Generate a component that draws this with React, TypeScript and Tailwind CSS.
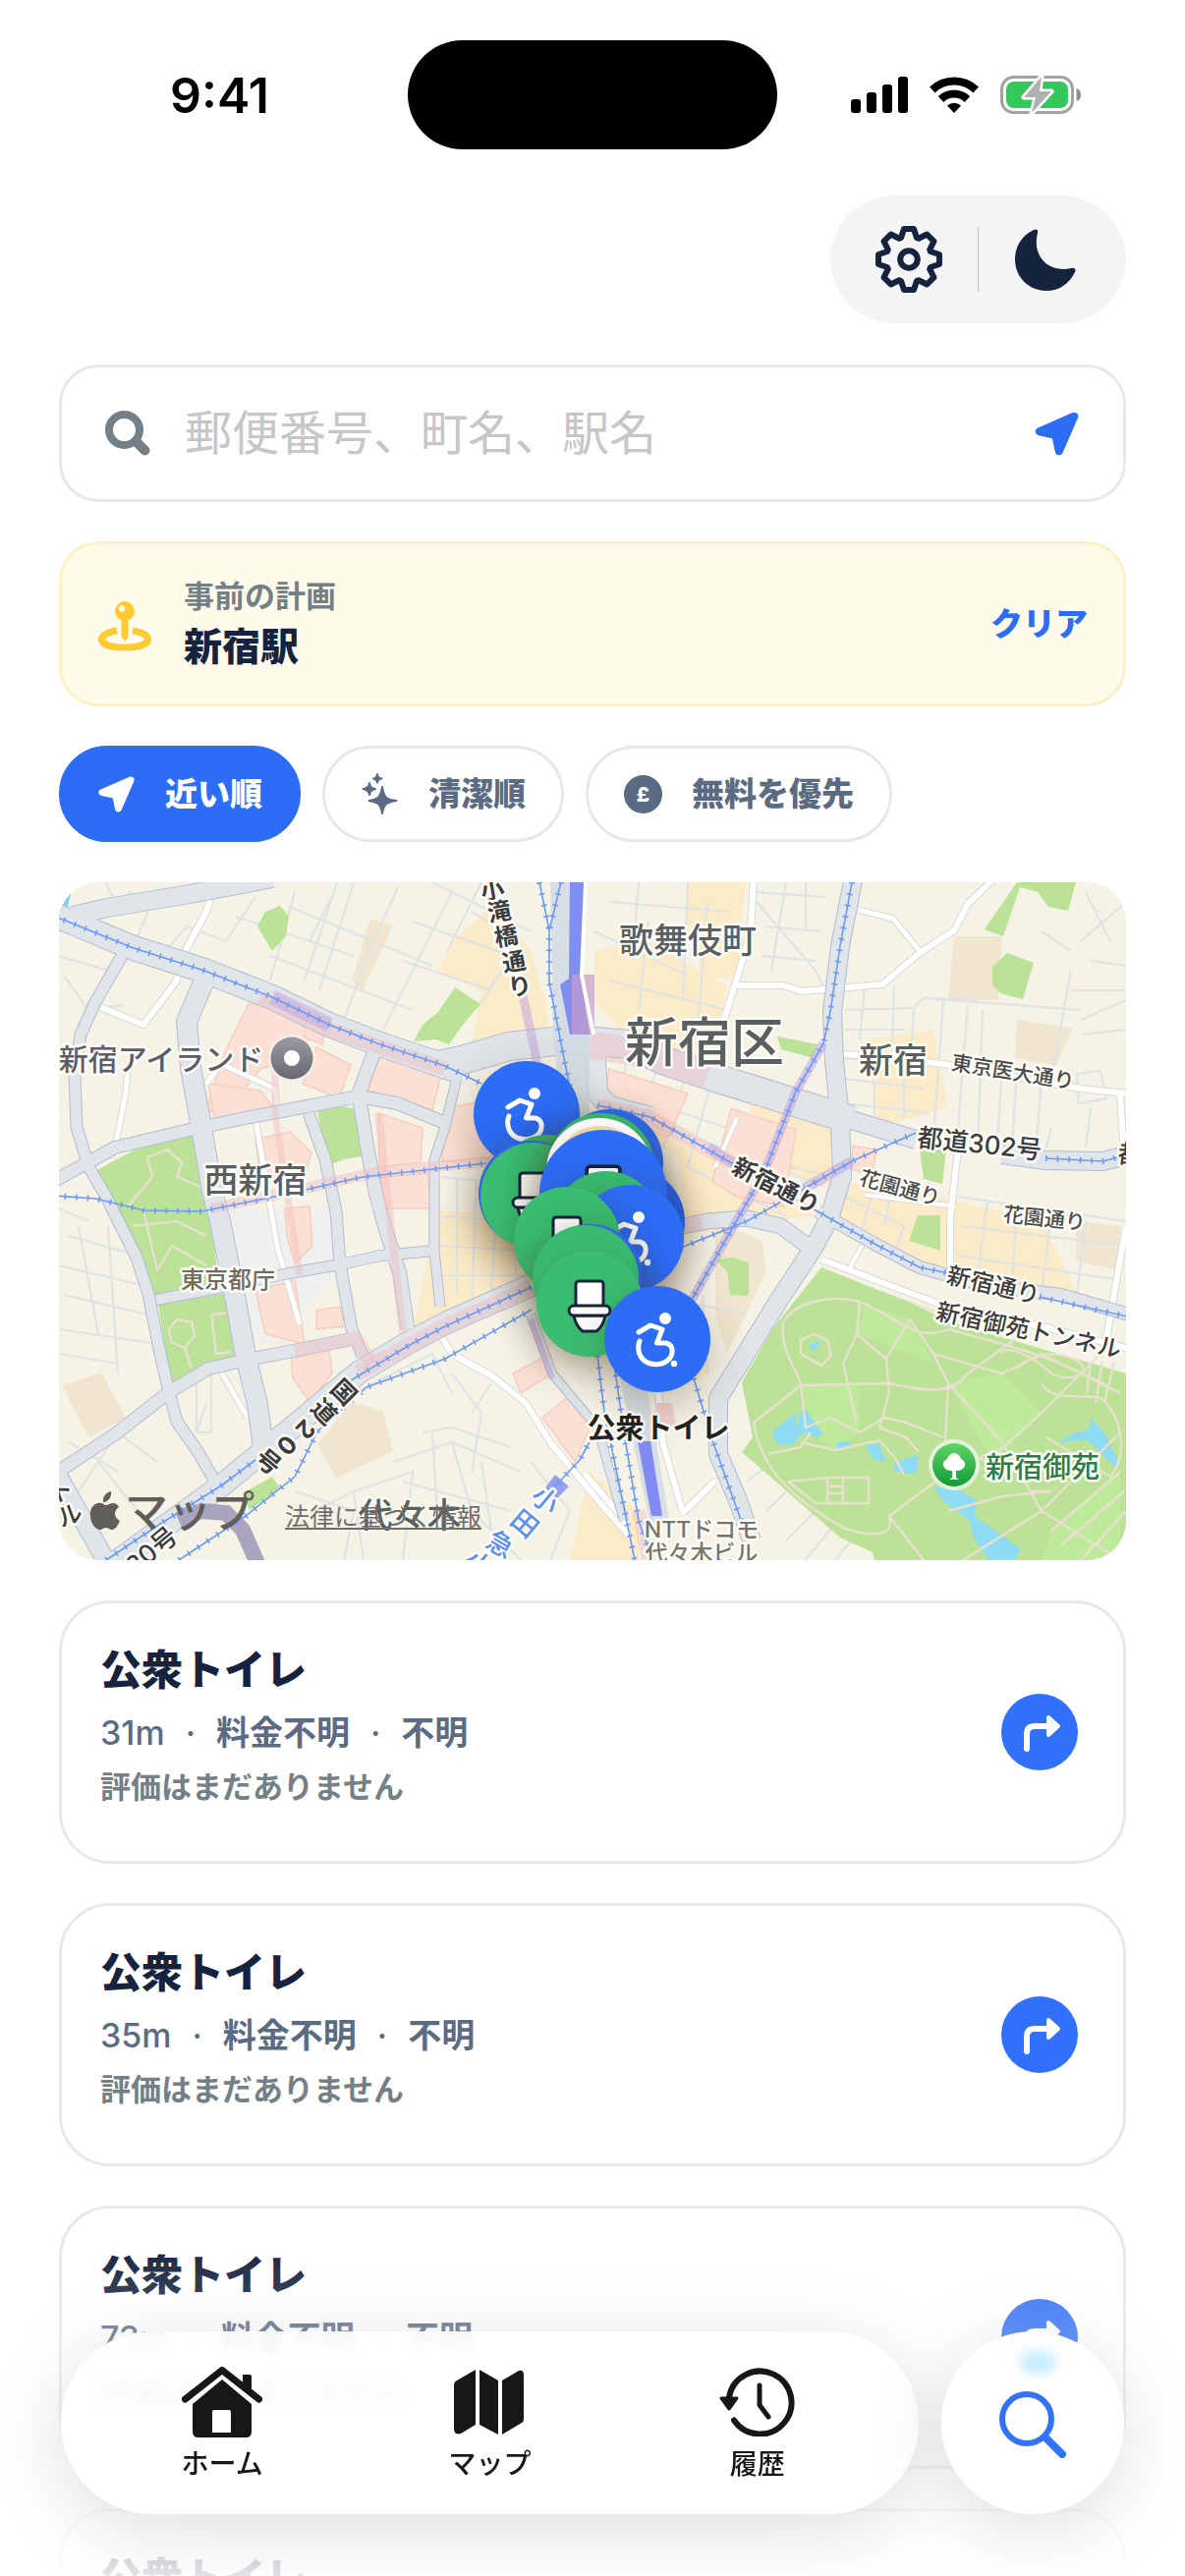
import { useState } from "react";

const places = [
  { id: 1, name: "公衆トイレ", distance: "31m", fee: "料金不明", access: "不明" },
  { id: 2, name: "公衆トイレ", distance: "35m", fee: "料金不明", access: "不明" },
  { id: 3, name: "公衆トイレ", distance: "73m", fee: "料金不明", access: "不明" },
  { id: 4, name: "公衆トイレ", distance: "80m", fee: "料金不明", access: "不明" },
];

// The map is drawn in a 1086 x 690 box
const MAP_W = 1086;
const MAP_H = 690;

type PinKind = "wheelchair" | "toilet" | "plain";

const pins: { x: number; y: number; size: number; color: string; kind: PinKind }[] = [
  { x: 476, y: 236, size: 108, color: "bg-[#2d6df6]", kind: "wheelchair" },
  { x: 497, y: 311, size: 108, color: "bg-[#3abd72]", kind: "plain" },
  { x: 481, y: 317, size: 108, color: "bg-[#2d6df6]", kind: "plain" },
  { x: 483, y: 319, size: 108, color: "bg-[#3abd72]", kind: "toilet" },
  { x: 561, y: 285, size: 108, color: "bg-[#2d6df6]", kind: "plain" },
  { x: 552, y: 289, size: 108, color: "bg-[#3abd72]", kind: "plain" },
  { x: 550, y: 294, size: 108, color: "bg-[#f6dfae] border-8 border-white", kind: "plain" },
  { x: 583, y: 345, size: 108, color: "bg-[#2560e6]", kind: "plain" },
  { x: 554, y: 317, size: 130, color: "bg-[#2d6df6]", kind: "toilet" },
  { x: 557, y: 348, size: 108, color: "bg-[#3abd72]", kind: "plain" },
  { x: 582, y: 362, size: 108, color: "bg-[#2d6df6]", kind: "wheelchair" },
  { x: 517, y: 364, size: 108, color: "bg-[#3abd72]", kind: "toilet" },
  { x: 540, y: 402, size: 108, color: "bg-[#2d6df6]", kind: "plain" },
  { x: 536, y: 403, size: 108, color: "bg-[#3abd72]", kind: "plain" },
  { x: 540, y: 429, size: 108, color: "bg-[#3abd72]", kind: "toilet" },
  { x: 609, y: 465, size: 108, color: "bg-[#2d6df6]", kind: "wheelchair" },
];

// d = centre line, w = width
const roads = [
  { w: 24, d: "M-10 31 L76 67 L148 90 L217 117 L275 145 L324 164 L393 187 L412 195" },
  { w: 28, d: "M385 186 L410 181 L458 167 L523 160 L580 165 L617 182 L668 199 L784 235 L807 242" },
  { w: 18, d: "M800 240 L872 262 M960 277 L1004 283 L1062 284 L1096 276" },
  { w: 18, d: "M14 34 L49 26 L133 12 L217 -4" },
  { w: 20, d: "M150 95 L130 142 L134 189 L145 249 L156 315 L164 345 L175 399 L190 482 L202 532 L210 590" },
  { w: 11, d: "M68 68 L37 122 L22 155 L16 199 L18 249 L30 289 L49 322 L79 382 L91 419 L102 475 L112 519 L120 549 L141 579 L160 612" },
  { w: 12, d: "M-10 307 L57 270 L133 252 L194 239 L248 229 L305 218 L344 225 L393 245" },
  { w: 13, d: "M320 175 L305 215 L313 265 L322 315 L332 352 L347 399 L355 455" },
  { w: 11, d: "M254 235 L271 282 L282 335 L286 389 L298 455 L309 482" },
  { w: 9, d: "M405 199 L393 249 L382 282 L382 342 L382 375 L388 432" },
  { w: 10, d: "M99 425 L152 415 L229 399 L286 389 L328 380 L382 375" },
  { w: 22, d: "M47 700 L164 615 L217 572 L305 499 L355 469 L393 449 L481 410" },
  { w: 12, d: "M-10 606 L57 562 L112 519 L152 495 L187 487 L248 475 L298 465" },
  { w: 18, d: "M-6 595 L53 700" },
  { w: 18, d: "M809 -6 L795 65 L787 132 L789 182 L795 242 L797 299 L784 342 L768 372 L733 425 L702 475 L671 525 L671 582 L691 629 L705 670" },
  { w: 15, d: "M620 353 L660 345 L700 342 L735 350 L764 372" },
  { w: 20, d: "M545 165 L548 215 L560 228 L602 239" },
  { w: 12, d: "M772 335 L830 368 L876 392 L940 410 L1020 420 L1096 442" },
  { w: 8, d: "M480 440 L502 500 L548 555 L575 650" },
];

const whiteRoads = [
  { w: 6, d: "M160 -4 L150 30 L122 82 L120 100 L86 145 L42 127" },
  { w: 5, d: "M70 190 L68 215 L58 265" },
  { w: 5, d: "M150 205 L165 185 L220 210 L222 235 M200 240 L210 300 L222 370 L245 450" },
  { w: 6, d: "M707 -4 L704 49 L691 95 L677 139 M689 105 L737 105 L756 111 L838 104 L876 72 L911 49 L925 22 L952 -4" },
  { w: 5, d: "M814 28 L849 37 L876 70" },
  { w: 6, d: "M799 175 L840 178 L900 185 L1040 210 L1096 216" },
  { w: 6, d: "M915 272 L907 342 L907 409 M1086 350 L1065 470 M1080 215 L1084 280" },
  { w: 6, d: "M776 384 L850 412 L911 435 L1000 452 L1090 475" },
  { w: 4, d: "M820 365 L805 392 M690 240 L668 290 M820 318 L912 330" },
  { w: 6, d: "M388 460 L400 480 L440 502 L475 530 L500 570 L545 625 L580 665" },
  { w: 6, d: "M610 520 L615 572 L635 642 M635 642 L668 609 M535 602 L580 655" },
  { w: 5, d: "M166 500 L192 545" },
];

const rails = [
  "M-6 34 L76 67 L148 90 L217 117 L275 145 L324 164 L393 187 L430 205",
  "M-6 319 L37 322 L87 334 L145 335 L210 322 L309 300 L435 286",
  "M294 509 L355 472 L393 452 L481 412",
  "M122 690 L190 645 L240 605 L263 559 L313 514 L393 485 L481 435",
  "M489 0 L499 49 L499 102 L512 169 L520 209",
  "M511 0 L499 49",
  "M807 0 L795 65 L785 132 L778 164 L749 215 L718 295 L691 342 L644 425",
  "M548 227 L602 239 L683 285 L772 335 L830 368 L876 392 L940 405 M998 422 L1096 444",
  "M633 372 L700 345 L753 315 L807 284 L872 255 M1004 281 L1062 284 L1086 278",
  "M548 482 L555 539 L586 690",
  "M565 490 L575 560 L590 650 L604 690",
  "M646 505 L664 565 L695 652",
  "M48 690 L100 655 L164 615 L200 588",
  "M500 620 L530 588 L548 555",
];

const parks = [
  "M776 392 L869 429 L905 447 L1086 500 V690 H830 L828 682 L795 667 L695 580 L706 565 L695 509 L726 455 Z",
  "M35 295 L85 268 L139 257 L152 332 L164 412 L97 420 L64 352 Z",
  "M101 430 L169 418 L181 482 L140 495 L114 510 Z",
  "M225 24 L234 35 L231 55 L217 70 L202 45 L210 30 Z",
  "M403 107 L429 124 L411 145 L397 165 L384 160 L361 162 L370 145 L386 132 Z",
  "M263 232 L283 228 L300 230 L309 279 L290 282 L273 289 Z",
  "M975 0 H1035 L1027 29 L1007 25 L996 10 L978 5 L961 55 L942 48 Z",
  "M965 72 L992 82 L981 119 L958 113 L950 105 V86 Z",
  "M731 157 L772 165 L768 179 L735 170 Z",
  "M876 272 H903 L899 307 L880 302 Z",
  "M874 339 H897 V375 L865 365 Z",
  "M668 384 L686 382 L702 387 V421 L683 420 L680 396 Z",
  "M217 605 L225 617 L194 639 L187 622 Z",
];

const tanBlocks = [
  "M317 37 L340 44 L309 110 L298 100 Z",
  "M3 512 L43 499 L68 545 L30 565 Z",
  "M298 529 L330 539 L340 579 L282 607 L263 572 Z",
  "M911 55 H960 L955 120 L905 118 Z",
  "M975 140 L1031 149 L1015 187 L973 179 Z",
  "M1035 345 L1080 350 L1078 395 L1035 385 Z",
  "M668 345 L715 365 L720 395 L680 480 L668 440 Z",
  "M780 396 L905 440 L903 448 L869 430 L790 402 Z",
];

const shopBlocks = [
  "M640 0 H700 L690 60 L640 45 Z",
  "M400 60 L445 20 L480 70 L495 120 L500 165 L420 165 L430 110 L385 90 Z",
  "M545 70 L600 60 L680 105 L660 190 L580 160 L545 120 Z",
  "M645 60 L700 55 L690 100 L655 95 Z",
  "M825 160 L890 150 L905 230 L830 250 Z",
  "M560 235 L690 290 L770 340 L700 345 L640 360 L630 280 Z",
  "M700 210 L785 240 L790 310 L715 290 Z",
  "M800 305 L900 320 L1000 345 L1040 425 L990 420 L850 380 L795 350 Z",
  "M385 335 L480 335 L490 405 L390 440 L360 455 Z",
  "M540 600 L590 640 V690 H520 Z",
  "M560 440 L640 430 L660 500 L620 520 Z",
];

const pinkBlocks = [
  "M194 122 L258 145 L247 178 L205 190 L165 240 L150 230 L170 170 Z",
  "M250 128 L272 136 L268 165 L250 158 Z",
  "M262 168 L297 186 L285 220 L248 205 Z",
  "M325 175 L388 200 L380 232 L315 212 Z",
  "M325 235 L370 250 L368 285 L326 290 Z",
  "M152 205 L205 212 L220 232 L158 240 Z",
  "M200 262 L235 254 L257 275 L250 300 L205 300 Z",
  "M328 300 L376 296 L378 332 L330 332 Z",
  "M392 230 L440 222 V280 L390 285 Z",
  "M200 415 L240 405 L250 470 L210 460 Z",
  "M262 436 L286 432 L292 452 L262 455 Z",
  "M236 482 L275 476 L278 500 L256 530 L238 505 Z",
  "M462 500 L500 480 L502 500 L470 520 Z",
  "M492 545 L520 522 L545 545 L525 590 Z",
  "M230 332 L255 330 L258 370 L240 388 L232 360 Z",
  "M684 230 L750 252 L738 330 L690 320 L665 305 Z",
  "M560 190 L640 215 L620 260 L555 230 Z",
  "M808 268 L832 272 L828 298 L806 292 Z",
];

const lakes = [
  "M726 559 L751 539 L749 556 L758 534 L778 562 L770 565 L757 560 L748 572 L736 573 L728 568 Z",
  "M820 574 L834 571 L842 589 L830 588 Z",
  "M792 570 L806 569 L804 574 L792 576 Z",
  "M849 592 L861 586 L875 584 L872 602 L860 602 L850 598 Z",
  "M890 615 L915 618 L934 629 L932 645 L979 679 L972 690 H946 L930 665 L927 650 L900 630 Z",
  "M1050 545 L1065 562 L1079 592 L1074 595 L1052 572 L1046 568 L1017 569 L1035 560 L1048 558 Z",
  "M764 472 L772 466 L774 472 L766 477 Z",
];

const trails = [
  "M737 448 C750 425 790 420 815 427 C850 440 870 470 905 455 C960 470 1010 480 1080 520",
  "M737 448 C733 480 755 500 755 512 L845 510 C890 520 910 520 925 500 L980 460",
  "M707 550 L755 512 L760 555 L785 545 L815 560 L840 545 L862 550 L900 565",
  "M707 550 C715 600 750 630 800 658 C840 670 850 660 845 645 C880 620 900 600 950 580",
  "M815 427 L812 460 L842 485 L845 520 L835 555 M812 460 L798 490 L812 550",
  "M866 445 L842 485 M866 445 L890 480 L905 510 L960 570 L1000 640 L1080 560",
  "M905 510 L902 570 L945 590 L1000 540 L1060 480 M890 480 L960 500 L1000 480 L1080 520",
  "M1000 510 C1010 530 1040 520 1060 525 C1080 540 1090 580 1070 605 L1005 565",
  "M960 480 C960 470 990 480 1010 500 C1030 510 1050 500 1040 490 C1010 470 985 485 975 495",
  "M722 582 L755 575 L765 560 M755 570 L790 578 L835 568 L850 585 L860 603 M835 555 L862 565 L875 580",
  "M742 610 L782 606 H824 V632 H782 V606 M742 610 L770 632 H824 M782 615 H798 M782 622 H798 M798 604 V632",
  "M845 645 L880 690 M920 690 L1000 640 M1000 640 L1080 690 M1010 660 L1080 600 M1020 675 L1084 620 M1040 690 L1086 640",
  "M755 480 V466 L768 460 L782 466 L786 482 L776 492 L755 480",
  "M1050 490 L1046 520 M1062 488 L1055 530 M1074 488 L1064 530 M990 620 H1010 L960 625 L905 640",
  "M90 280 L110 272 L125 285 L120 300 L145 310 M70 330 L95 300 L90 280 M75 350 L120 345 L150 360 M100 395 L115 370 L150 390 M85 330 L100 395",
  "M112 455 L120 445 L135 448 L138 462 L128 474 L114 468 Z M128 474 L135 495 M155 440 L160 480 L175 478 M155 440 L172 438",
];

const sideStreets = [
  "M0 75 L50 90 L40 130 M5 95 L30 130 L65 125 M45 -5 L60 25 M80 55 L95 20 L70 10",
  "M100 80 L130 45 L170 60 M170 60 L200 15 M240 10 L215 100 M255 60 L280 10 M285 -5 L250 100",
  "M180 35 L300 75 M235 25 L380 85 M215 75 L360 130 M300 0 L265 110 M345 5 L320 60 L290 140 M400 10 L330 150 M380 0 L480 50",
  "M360 40 L460 75 L425 130 M420 30 L470 60 M350 80 L440 110 M430 0 L395 70",
  "M560 20 L680 30 M545 50 L640 95 M590 0 L585 60 M600 40 L590 130 M640 0 L635 120 M560 100 L680 130 M660 20 L650 150",
  "M710 10 L780 15 M720 45 L775 50 M715 75 L770 80 M740 0 L725 90 M710 20 L770 90 L790 130 M760 0 V50",
  "M800 130 L870 128 L880 118 L935 120 M820 105 L815 160 M850 105 L848 170 M870 130 L865 200 M800 150 H860 M880 118 L1040 130 M925 125 L915 250",
  "M900 120 L890 260 M940 130 L935 270 M960 190 L955 265 M975 190 L970 270 M1000 200 L995 265 M1030 90 L1010 200 M1050 80 L1086 85 M860 200 V240 M830 190 V240 M1030 110 H1086 M1040 60 L1086 20 M1000 50 L1030 70",
  "M1036 195 L1060 192 L1066 220 L1038 225 Z M1040 140 L1086 120 M1042 155 L1086 150 M1045 10 L1070 60",
  "M820 180 H790 M800 200 L880 210 M800 225 L885 235 M1010 250 L1005 270 M1050 230 L1045 270",
  "M800 320 L860 350 L850 380 M830 310 L815 360 M850 300 L840 350 M915 320 L1086 345 M920 350 L1086 370 M915 380 L1080 405 M945 325 L935 400 M975 330 L970 410 M1010 335 L1000 420 M1045 345 L1035 430",
  "M560 210 L680 250 M580 170 L565 250 M610 180 L590 265 M640 190 L615 270 M665 200 L640 290 M620 250 L780 310 M640 290 L740 340 M720 240 L705 330 M750 250 L735 330 M700 280 L790 300",
  "M10 360 L80 380 M0 390 L85 410 M5 420 L90 440 M20 350 L40 460 M50 350 L60 500 M0 455 L100 470 M0 480 L60 490 M-5 330 L30 345",
  "M390 340 L470 345 M385 370 L480 375 M385 400 L475 400 M405 300 V420 M425 300 L420 430 M445 340 L440 420 M465 340 V410 M390 300 L440 305",
  "M300 520 L380 480 L400 520 M340 590 L400 570 L470 600 M380 560 L385 640 M350 610 L460 640 M400 570 L420 640 L470 690 M430 590 L440 660 M300 620 L360 600 L350 690 M260 640 L300 620 L310 690",
  "M400 500 L430 540 L420 600 M440 510 L420 540 M370 560 L400 555 L460 575 M240 620 L300 640 L290 690 M480 590 L520 640 L500 690",
  "M150 530 L140 560 M140 500 V560 H155 V500 M20 620 L60 560 L100 590 M40 590 L80 640 M10 570 L60 600",
  "M560 470 L580 500 M590 440 L640 460 M600 420 L700 440 M610 470 L625 500 M640 440 L640 500 M655 420 L660 500",
  "M720 640 L760 600 M740 670 L790 620 M760 690 L800 640 M700 610 L740 580 M790 690 L815 660",
];

const labels = [
  { t: "歌舞伎町", x: 640, y: 59, s: 35, c: "#5a5f60" },
  { t: "新宿区", x: 657, y: 163, s: 54, c: "#5a5f60" },
  { t: "新宿", x: 849, y: 181, s: 35, c: "#5a5f60" },
  { t: "東京医大通り", x: 971, y: 193, s: 21, c: "#4b4b4b", r: 9 },
  { t: "都道302号", x: 937, y: 266, s: 26, c: "#3c3c3e", r: 6 },
  { t: "都", x: 1091, y: 277, s: 26, c: "#3c3c3e", r: 6 },
  { t: "花園通り", x: 856, y: 311, s: 21, c: "#4b4b4b", r: 15 },
  { t: "花園通り", x: 1003, y: 342, s: 21, c: "#4b4b4b", r: 6 },
  { t: "新宿通り", x: 730, y: 309, s: 24, c: "#3c3c3e", r: 27, w: 700 },
  { t: "新宿通り", x: 951, y: 410, s: 24, c: "#3c3c3e", r: 13 },
  { t: "新宿御苑トンネル", x: 987, y: 456, s: 24, c: "#3c3c3e", r: 12 },
  { t: "新宿アイランド", x: 104, y: 180, s: 30, c: "#5c5c6b" },
  { t: "西新宿", x: 200, y: 303, s: 35, c: "#5a5f60" },
  { t: "東京都庁", x: 172, y: 404, s: 24, c: "#6d6c60" },
  { t: "代々木", x: 357, y: 644, s: 35, c: "#5a5f60" },
  { t: "公衆トイレ", x: 610, y: 555, s: 29, c: "#222222", w: 700 },
  { t: "NTTドコモ", x: 654, y: 659, s: 23, c: "#77766a" },
  { t: "代々木ビル", x: 654, y: 683, s: 23, c: "#77766a" },
  { t: "新宿御苑", x: 1001, y: 595, s: 29, c: "#2e7d46" },
  { t: "小", x: 441, y: 8, s: 24, c: "#3c3c3e", r: -10, w: 700 },
  { t: "滝", x: 448, y: 30, s: 24, c: "#3c3c3e", r: -10, w: 700 },
  { t: "橋", x: 455, y: 55, s: 24, c: "#3c3c3e", r: -10, w: 700 },
  { t: "通", x: 463, y: 81, s: 24, c: "#3c3c3e", r: -10, w: 700 },
  { t: "り", x: 469, y: 106, s: 24, c: "#3c3c3e", r: -10, w: 700 },
  { t: "国", x: 290, y: 519, s: 25, c: "#3c3c3e", r: 45, w: 700 },
  { t: "道", x: 270, y: 539, s: 25, c: "#3c3c3e", r: 45, w: 700 },
  { t: "2", x: 251, y: 557, s: 25, c: "#3c3c3e", r: 135, w: 700 },
  { t: "0", x: 232, y: 573, s: 25, c: "#3c3c3e", r: 135, w: 700 },
  { t: "号", x: 213, y: 590, s: 25, c: "#3c3c3e", r: 40, w: 700 },
  { t: "20号", x: 94, y: 680, s: 26, c: "#3c3c3e", r: -40 },
  { t: "ト", x: 2, y: 620, s: 25, c: "#3c3c3e", r: -20 },
  { t: "ル", x: 11, y: 644, s: 25, c: "#3c3c3e", r: -20 },
  { t: "小", x: 495, y: 629, s: 27, c: "#5b8ff0", r: 40 },
  { t: "田", x: 474, y: 653, s: 27, c: "#5b8ff0", r: 40 },
  { t: "急", x: 449, y: 674, s: 27, c: "#5b8ff0", r: 30 },
  { t: "小", x: 427, y: 694, s: 27, c: "#5b8ff0", r: 40 },
];

const MapDrawing = () => {
  return (
    <svg viewBox={`0 0 ${MAP_W} ${MAP_H}`} className="block w-full" aria-hidden="true">
      <defs>
        <linearGradient id="poiGray" x1="0" y1="0" x2="0" y2="1">
          <stop offset="0" stopColor="#9a9aa3" />
          <stop offset="1" stopColor="#686872" />
        </linearGradient>
        <linearGradient id="poiGreen" x1="0" y1="0" x2="0" y2="1">
          <stop offset="0" stopColor="#5fd566" />
          <stop offset="1" stopColor="#129a35" />
        </linearGradient>
      </defs>
      <rect width={MAP_W} height={MAP_H} fill="#f5f2e6" />
      <path d="M0 0 H15 L8 28 L0 36 Z" fill="#7fd3ea" />
      <path d="M175 332 H278 L285 390 L230 470 L200 470 Z" fill="#f0f0ef" />
      <g fill="#f0e5ce">
        {tanBlocks.map((d) => (
          <path key={d} d={d} />
        ))}
      </g>
      <g fill="#fcebc8">
        {shopBlocks.map((d) => (
          <path key={d} d={d} />
        ))}
      </g>
      <g fill="none" stroke="#dfe3e4" strokeWidth="2.2">
        {sideStreets.map((d) => (
          <path key={d} d={d} />
        ))}
      </g>
      <g fill="#fbe0d3" stroke="#f8cdc0" strokeWidth="1.5">
        {pinkBlocks.map((d) => (
          <path key={d} d={d} />
        ))}
      </g>
      <g fill="#bbe296">
        {parks.map((d) => (
          <path key={d} d={d} />
        ))}
      </g>
      <g fill="#c0ea9b">
        <path d="M820 430 L866 445 L890 490 L840 470 L812 460 Z" />
        <path d="M960 500 L1000 540 L950 590 L905 510 Z" />
        <path d="M755 512 L812 512 L815 560 L790 578 L760 555 Z" />
        <path d="M1010 660 L1080 600 V690 H1000 Z" />
      </g>
      <g fill="#8edbf4">
        {lakes.map((d) => (
          <path key={d} d={d} />
        ))}
      </g>
      <g fill="none" stroke="#e9e0cf" strokeWidth="2.4" strokeLinejoin="round">
        {trails.map((d) => (
          <path key={d} d={d} />
        ))}
      </g>
      {/* White roads */}
      <g fill="none" strokeLinejoin="round">
        {whiteRoads.map((road) => (
          <path key={road.d} d={road.d} stroke="#d9d9d6" strokeWidth={road.w + 2} />
        ))}
        {whiteRoads.map((road) => (
          <path key={road.d} d={road.d} stroke="#ffffff" strokeWidth={road.w} />
        ))}
      </g>
      {/* Main roads, casing first */}
      <g fill="none" strokeLinejoin="round">
        {roads.map((road) => (
          <path key={road.d} d={road.d} stroke="#b4bad2" strokeWidth={road.w + 2} />
        ))}
        {roads.map((road) => (
          <path key={road.d} d={road.d} stroke="#e0e5ea" strokeWidth={road.w} />
        ))}
      </g>
      {/* Station areas and underground passages */}
      <g fill="none" stroke="#f0b9bd" strokeOpacity=".42">
        <path d="M156 332 L248 312 L324 295 L440 284" strokeWidth="11" />
        <path d="M205 117 L275 150 L393 190" strokeWidth="15" />
        <path d="M305 499 L393 452 L481 412" strokeWidth="16" />
        <path d="M240 478 L302 464 L318 490" strokeWidth="14" />
        <path d="M325 235 L350 460" strokeWidth="8" />
        <path d="M540 165 L600 176 L660 196" strokeWidth="28" />
        <path d="M220 190 V235 L245 400" strokeWidth="7" />
        <path d="M548 227 L602 239 L683 285" strokeWidth="14" />
        <path d="M590 640 L600 690 M630 352 L655 346" strokeWidth="14" />
      </g>
      <g fill="none" stroke="#c3a6dc" strokeOpacity=".55">
        <path d="M778 164 L749 215 L718 295 L691 342 L644 425" strokeWidth="9" />
        <path d="M472 115 L485 175 L490 215" strokeWidth="9" />
        <path d="M217 117 L275 145" strokeWidth="15" />
        <path d="M753 315 L807 284 M660 270 L690 288" strokeWidth="11" />
        <path d="M480 445 L502 505" strokeWidth="6" />
      </g>
      <path d="M122 650 L145 640 L170 642 L187 659 L205 700" fill="none" stroke="#aba4bf" strokeWidth="16" />
      <path d="M500 0 H522 V150 H540 V240 H512 L503 160 Z M570 500 H596 L622 655 H602 Z" fill="#cfd9e4" fillOpacity=".8" />
      <path d="M520 -2 H536 L531 95 L540 155 H520 L510 104 L519 98 Z" fill="#808ef2" />
      <path d="M522 94 L545 94 L545 155 L522 155 Z" fill="#c69ccb" fillOpacity=".7" />
      <path d="M536 0 L532 95 L544 155" fill="none" stroke="#ffffff" strokeWidth="4" />
      <path d="M589 569 L602 569 L614 645 H603 Z" fill="#8189f2" />
      <path d="M608 530 L624 530 L628 553 L612 555 Z" fill="#f3d2ce" />
      <path d="M505 603 L519 615 L506 628 L495 616 Z" fill="#96a0ea" />
      <g fill="none" strokeLinejoin="round">
        {rails.map((d) => (
          <g key={d}>
            <path d={d} stroke="#6c9af5" strokeWidth="1.6" />
            <path d={d} stroke="#6c9af5" strokeWidth="6" strokeDasharray="1.6 10" />
          </g>
        ))}
      </g>
      {/* Points of interest */}
      <circle cx="237" cy="179" r="24" fill="#f2efed" />
      <circle cx="237" cy="179" r="21.5" fill="url(#poiGray)" />
      <circle cx="237" cy="179" r="8" fill="#ffffff" />
      <circle cx="911" cy="593" r="26" fill="#e6f3dc" />
      <circle cx="911" cy="593" r="22" fill="url(#poiGreen)" />
      <path d="M909 606 V599 Q902 599 900 594 Q899 589 904 587 Q905 582 911 581 Q917 582 918 587 Q923 589 922 594 Q920 599 913 599 V606 L916 608 H906 Z" fill="#ffffff" />
      {/* Place names */}
      {labels.map((label, key) => (
        <text
          key={key}
          x={label.x}
          y={label.y}
          fontSize={label.s}
          fill={label.c}
          fontWeight={label.w ?? 500}
          stroke="#fdfcf7"
          strokeWidth="5"
          strokeLinejoin="round"
          paintOrder="stroke"
          textAnchor="middle"
          dominantBaseline="central"
          transform={label.r ? `rotate(${label.r} ${label.x} ${label.y})` : undefined}
        >
          {label.t}
        </text>
      ))}
      {/* Map provider mark */}
      <path
        d="M53 620 C54 626 50 631 45 631 C44 626 48 621 53 620 Z M32 645 C31 636 37 631 43 632 C45 632 46 634 48 634 C50 634 52 632 55 632 C58 632 60 634 61 636 C55 640 56 647 62 650 C60 655 57 659 54 659 C52 659 50 657 48 657 C45 657 44 659 42 659 C37 659 32 652 32 645 Z"
        fill="#5f5e5a"
      />
      <text x="133" y="641" fontSize="44" fontWeight="500" fill="#5f5e5a" textAnchor="middle" dominantBaseline="central">
        マップ
      </text>
    </svg>
  );
};

const WheelchairIcon = () => (
  <svg viewBox="0 0 108 108" className="size-full" fill="none" stroke="#fff" strokeWidth="5" strokeLinecap="round" strokeLinejoin="round" aria-hidden="true">
    <circle cx="62" cy="33" r="6" fill="#fff" stroke="none" />
    <path d="M35 47 L47 40 L59 44 L53.500 58 L63 58 Q70 60 69 68 C66 84 38 84 35 66 Q34 60 36 56" />
    <circle cx="71" cy="79" r="3.2" fill="#fff" stroke="none" />
  </svg>
);

const ToiletIcon = () => (
  <svg viewBox="0 0 108 108" className="size-full" fill="#fff" stroke="#16233f" strokeWidth="3" strokeLinejoin="round" aria-hidden="true">
    <rect x="40" y="31" width="28" height="26" rx="3" />
    <path d="M38 66 H70 Q68 77 61 82 H47 Q40 77 38 66 Z" />
    <rect x="33" y="56" width="42" height="10" rx="5" />
  </svg>
);

const NavigateIcon = ({ className }: { className: string }) => (
  <svg viewBox="0 0 40 40" className={className} fill="currentColor" stroke="currentColor" strokeWidth="7" strokeLinejoin="round" aria-hidden="true">
    <path d="M35 5 L5 18 L19 21 L22 35 Z" />
  </svg>
);

const SparklesIcon = () => (
  <svg viewBox="0 0 36 42" className="h-[42px] w-[39px]" fill="currentColor" stroke="currentColor" strokeWidth="2" strokeLinejoin="round" aria-hidden="true">
    <path d="M20.500 14 Q22 23 25 25 Q28 27 35 28 Q28 29 25 31 Q22 33 20.500 41 Q19 33 16 31 Q13 29 7 28 Q13 27 16 25 Q19 23 20.500 14 Z" />
    <path d="M7.500 10 Q8 15 13.500 16 Q8 17 7.500 22 Q7 17 1 16 Q7 15 7.500 10 Z" />
    <path d="M15.500 1 Q16 5 20 5.500 Q16 6 15.500 9.500 Q15 6 11.500 5.500 Q15 5 15.500 1 Z" />
  </svg>
);

const PoundIcon = () => (
  <svg viewBox="0 0 38 38" className="size-[39px]" aria-hidden="true">
    <circle cx="19" cy="19" r="19" fill="currentColor" />
    <text x="19" y="26" fontSize="20" fontWeight="800" fill="#fff" textAnchor="middle">
      £
    </text>
  </svg>
);

const GearIcon = () => (
  <svg viewBox="-34 -34 68 68" className="size-[68px]" fill="none" stroke="currentColor" strokeWidth="6" strokeLinejoin="round" aria-hidden="true">
    <path
      d={
        [0, 45, 90, 135, 180, 225, 270, 315]
          .flatMap((deg) => {
            const a = (deg * Math.PI) / 180;
            return [
              [-8, -22],
              [-5, -31],
              [5, -31],
              [8, -22],
            ].map(([x, y]) => `${x * Math.cos(a) - y * Math.sin(a)} ${x * Math.sin(a) + y * Math.cos(a)}`);
          })
          .map((point, key) => (key === 0 ? "M" : "L") + point)
          .join(" ") + " Z"
      }
    />
    <circle r="8.800" />
  </svg>
);

const StatusBar = () => {
  return (
    <div className="flex pt-[41px] text-black">
      <div className="flex flex-1 items-center justify-center pl-8 text-[50px] leading-none font-semibold">9:41</div>
      <div className="h-[111px] w-[376px] rounded-full bg-black" />
      <div className="flex flex-1 items-center justify-center gap-[22px] pr-8">
        <svg viewBox="0 0 58 37" className="h-[37px] w-[58px]" aria-hidden="true">
          <rect y="23" width="10" height="14" rx="3" />
          <rect x="16" y="16" width="10" height="21" rx="3" />
          <rect x="32" y="8" width="10" height="29" rx="3" />
          <rect x="48" width="10" height="37" rx="3" />
        </svg>
        <svg viewBox="0 0 50 37" className="h-[37px] w-[50px]" fill="none" stroke="#000" strokeWidth="8" aria-hidden="true">
          <path d="M2.800 13.500 A32 32 0 0 1 47.200 13.500" />
          <path d="M11.500 23 A19.500 19.500 0 0 1 38.500 23" />
          <path d="M25 37 L18 29.500 A10 10 0 0 1 32 29.500 Z" fill="#000" stroke="none" />
        </svg>
        <svg viewBox="0 0 82 39" className="h-[39px] w-[82px]" aria-hidden="true">
          <rect x="1.500" y="1.500" width="72" height="36" rx="12" fill="none" stroke="#a2a2a2" strokeWidth="3" />
          <rect x="6" y="6" width="63" height="27" rx="8" fill="#34c759" />
          <path d="M77.500 13 Q82 14 82 19.500 Q82 25 77.500 26 Z" fill="#8f8f8f" />
          <path d="M42 1 L24 22 H36 L32 38 L52 16 H40 Z" fill="#b0b0b0" stroke="#fff" strokeWidth="5" strokeLinejoin="round" paintOrder="stroke" />
        </svg>
      </div>
    </div>
  );
};

const filters = [
  { id: "near", title: "近い順", icon: <NavigateIcon className="size-[39px]" /> },
  { id: "clean", title: "清潔順", icon: <SparklesIcon /> },
  { id: "free", title: "無料を優先", icon: <PoundIcon /> },
];

const tabs = [
  {
    title: "ホーム",
    icon: (
      <svg viewBox="0 0 82 72" className="h-[72px] w-[82px]" fill="currentColor" aria-hidden="true">
        <path d="M3.500 33 L41 3.500 L78.500 33" fill="none" stroke="currentColor" strokeWidth="7" strokeLinecap="round" strokeLinejoin="round" />
        <path d="M62 8 H69 Q71 8 71 10 V29 L62 21 Z" />
        <path fillRule="evenodd" d="M41 13 L71 38 V66 Q71 72 65 72 H17 Q11 72 11 66 V38 Z M33 44 Q31 44 31 46 V67 H50 V46 Q50 44 48 44 Z" />
      </svg>
    ),
  },
  {
    title: "マップ",
    icon: (
      <svg viewBox="0 0 72 66" className="h-[66px] w-[72px]" fill="currentColor" aria-hidden="true">
        <path d="M22 0 V56 L7 65 Q0 67 0 60 V16 Q0 12 3 11 Z" />
        <path d="M26 0 L45 11 V66 L26 56 Z" />
        <path d="M49 66 V11 L66 1 Q71 0 71 5 V50 Q71 53 69 54 Z" />
      </svg>
    ),
  },
  {
    title: "履歴",
    icon: (
      <svg viewBox="0 0 77 70" className="h-[70px] w-[77px]" fill="none" stroke="currentColor" strokeWidth="6" strokeLinecap="round" strokeLinejoin="round" aria-hidden="true">
        <path d="M15 53.500 A32 32 0 1 0 10 30" />
        <path d="M41 18 V38 L50 50" strokeWidth="5" />
        <path d="M2 31 H18 L10 42 Z" fill="currentColor" strokeWidth="3" />
      </svg>
    ),
  },
];

const App = () => {
  const [filter, setFilter] = useState("near");
  const [query, setQuery] = useState("");

  return (
    <div className="relative h-screen overflow-hidden bg-white font-['Inter','Noto_Sans_CJK_JP',sans-serif] text-[#16233f]">
      <StatusBar />

      <main className="px-[60px] pt-[47px]">
        {/* Settings and theme */}
        <div className="flex justify-end">
          <div className="flex h-[130px] items-center rounded-full bg-[#f4f4f5] px-[10px]">
            <button className="flex w-[140px] justify-center" aria-label="設定">
              <GearIcon />
            </button>
            <div className="h-[66px] w-px bg-[#bcbcbe]" />
            <button className="flex w-[140px] justify-center pr-1" aria-label="ダークモード">
              <svg viewBox="0 0 62 63" className="h-[63px] w-[62px]" fill="currentColor" aria-hidden="true">
                <path d="M19 1 Q24 -1 23 4 C17 28 34 45 57 40 Q63 39 61 44 C55 56 45 63 32 63 C14 63 0 49 0 31 C0 17 8 6 19 1 Z" />
              </svg>
            </button>
          </div>
        </div>

        {/* Search */}
        <div className="mt-[42px] flex h-[140px] items-center rounded-[40px] border-3 border-[#e5e9ed] bg-white pr-[44px] pl-11">
          <svg viewBox="0 0 46 46" className="size-[46px] shrink-0 text-[#747f86]" fill="none" stroke="currentColor" strokeLinecap="round" aria-hidden="true">
            <circle cx="19.500" cy="19.500" r="15.500" strokeWidth="8" />
            <path d="M32 32 L40.500 40.500" strokeWidth="10" />
          </svg>
          <input
            type="text"
            aria-label="検索"
            value={query}
            onChange={(e) => setQuery(e.target.value)}
            placeholder="郵便番号、町名、駅名"
            className="ml-[35px] min-w-0 flex-1 text-[48px] outline-none placeholder:text-[#c5c6c8]"
          />
          <button className="text-[#2d6df6]" aria-label="現在地">
            <NavigateIcon className="size-[47px]" />
          </button>
        </div>

        {/* Planned place */}
        <div className="mt-10 flex items-center rounded-[40px] border-3 border-[#ffefc3] bg-[#fffbea] py-8 pr-9 pl-[37px]">
          <svg viewBox="0 0 54 51" className="mt-1 h-[51px] w-[54px] shrink-0" aria-hidden="true">
            <path d="M19 30 C-3 33 -3 47 27 47 C57 47 57 33 35 30" fill="none" stroke="#ffcb30" strokeWidth="7" />
            <path d="M23.500 18 H30.500 V36 L27 41 L23.500 36 Z" fill="#ffcb30" />
            <circle cx="27" cy="10" r="10" fill="#ffcb30" />
            <circle cx="24" cy="7.500" r="3.200" fill="#fffbea" />
          </svg>
          <div className="ml-[33px] flex-1 pb-0">
            <p className="text-[31px] leading-[42px] font-bold text-[#747f86]">事前の計画</p>
            <p className="mt-1 text-[39px] leading-[52px] font-black">新宿駅</p>
          </div>
          <button className="text-[33px] leading-10 font-black text-[#2d6df6]">クリア</button>
        </div>

        {/* Sort chips */}
        <div className="mt-10 flex gap-[22px]">
          {filters.map((item) => (
            <button
              key={item.id}
              onClick={() => setFilter(item.id)}
              aria-pressed={filter === item.id}
              className={`flex h-[98px] items-center gap-[30px] rounded-full border-3 px-9 text-[33px] leading-10 font-black whitespace-nowrap ${
                filter === item.id
                  ? "border-[#2d6df6] bg-[#2d6df6] text-white"
                  : "border-[#e6e8ec] bg-white text-[#5b6b84]"
              }`}
            >
              {item.icon}
              {item.title}
            </button>
          ))}
        </div>

        {/* Map */}
        <div className="relative mt-[41px] overflow-hidden rounded-[40px]">
          <MapDrawing />
          {pins.map((pin, key) => (
            <button
              key={key}
              aria-label="公衆トイレ"
              className={`absolute -translate-x-1/2 -translate-y-1/2 rounded-full shadow-[0_14px_44px_rgba(70,50,20,0.3)] ${pin.color}`}
              style={{
                left: `${(pin.x / MAP_W) * 100}%`,
                top: `${(pin.y / MAP_H) * 100}%`,
                width: pin.size,
                height: pin.size,
              }}
            >
              {pin.kind === "wheelchair" && <WheelchairIcon />}
              {pin.kind === "toilet" && <ToiletIcon />}
            </button>
          ))}
          <a href="#legal" className="absolute bottom-[28px] left-[230px] text-[25px] leading-8 text-[#6f6e6a] underline">
            法律に基づく情報
          </a>
        </div>

        {/* Results */}
        <ul className="mt-[41px] flex flex-col gap-10">
          {places.map((place) => (
            <li key={place.id} className="flex items-center rounded-[52px] border-3 border-[#e6e8ec] bg-white py-10 pr-[46px] pl-[39px]">
              <div className="flex-1 pt-1 pb-[15px]">
                <h2 className="text-[42px] leading-[48px] font-black">{place.name}</h2>
                <p className="mt-5 flex gap-[21px] text-[34px] leading-10 font-medium text-[#5b6b84]">
                  <span>{place.distance}</span>
                  <span>·</span>
                  <span className="font-bold">{place.fee}</span>
                  <span>·</span>
                  <span className="font-bold">{place.access}</span>
                </p>
                <p className="mt-[15px] text-[31px] leading-10 font-bold text-[#747f86]">評価はまだありません</p>
              </div>
              <button className="size-[78px] rounded-full bg-[#3070fa]" aria-label="経路">
                <svg viewBox="0 0 78 78" className="size-full" fill="none" stroke="#fff" strokeWidth="6" strokeLinecap="round" aria-hidden="true">
                  <path d="M26 56 V41 Q26 33 34 33 H46" />
                  <path d="M48 24 L58 33 L48 42 Z" fill="#fff" strokeWidth="4" strokeLinejoin="round" />
                </svg>
              </button>
            </li>
          ))}
        </ul>
      </main>

      {/* Bottom fade and tab bar */}
      <div className="pointer-events-none absolute inset-x-0 bottom-0 h-[340px] bg-linear-to-b from-white/0 to-white/88" />
      <nav className="absolute inset-x-[62px] bottom-[63px] flex gap-[23px]">
        <div className="flex h-[186px] flex-1 rounded-full bg-white/90 px-7 shadow-[0_16px_80px_rgba(0,0,0,0.13)] backdrop-blur-[5px]">
          {tabs.map((tab) => (
            <button key={tab.title} className="flex flex-1 flex-col items-center pt-8 text-[#171717]">
              <span className="flex h-20 items-center">{tab.icon}</span>
              <span className="mt-[5px] text-[28px] leading-9 font-medium">{tab.title}</span>
            </button>
          ))}
        </div>
        <button
          className="relative flex size-[186px] items-center justify-center rounded-full bg-white/98 pt-1 text-[#3073f7] shadow-[0_16px_80px_rgba(0,0,0,0.13)] backdrop-blur-[6px]"
          aria-label="検索"
        >
          <span className="absolute top-5 left-20 h-6 w-9 rounded-full bg-[#ccefff] blur-[4px]" />
          <svg viewBox="0 0 68 68" className="size-[68px]" fill="none" stroke="currentColor" strokeLinecap="round" aria-hidden="true">
            <circle cx="28" cy="28" r="25" strokeWidth="6" />
            <path d="M48 48 L64 64" strokeWidth="8" />
          </svg>
        </button>
      </nav>
    </div>
  );
};

export default App;
